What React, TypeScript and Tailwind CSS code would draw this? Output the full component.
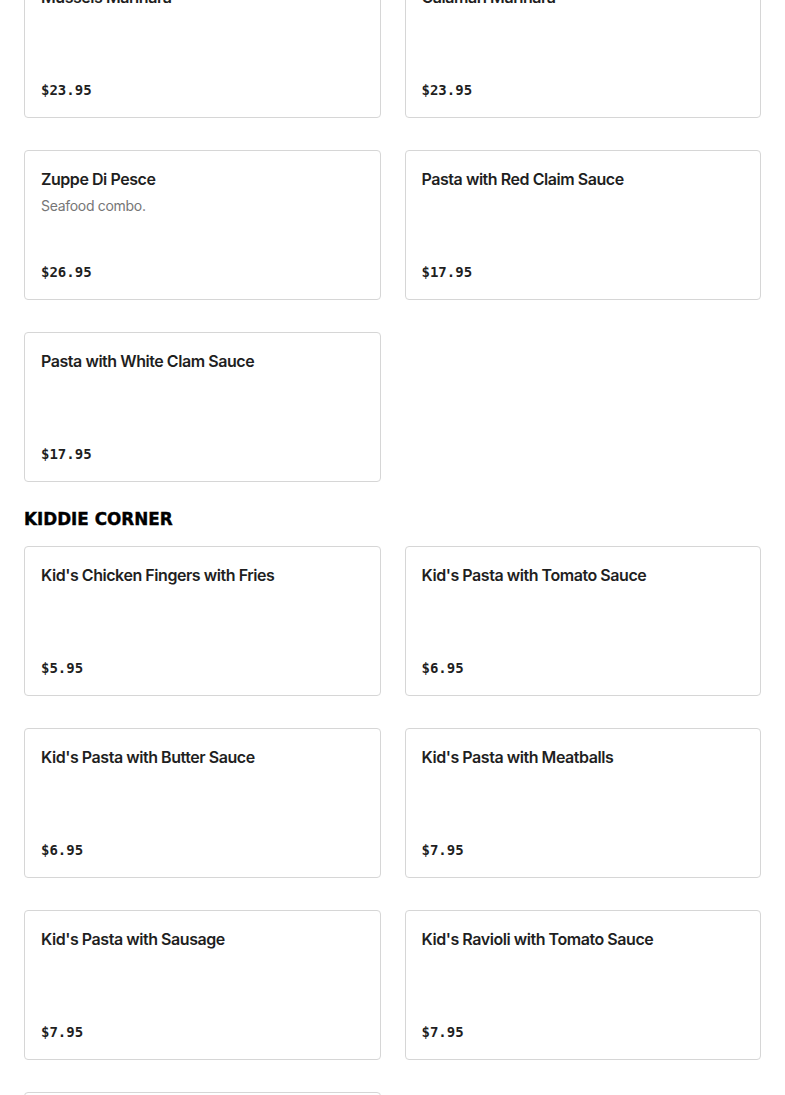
import React from "react";

type Item = { name: string; desc?: string; price: string };

const seafood: Item[] = [
  { name: "Mussels Marinara", price: "$23.95" },
  { name: "Calamari Marinara", price: "$23.95" },
  { name: "Zuppe Di Pesce", desc: "Seafood combo.", price: "$26.95" },
  { name: "Pasta with Red Claim Sauce", price: "$17.95" },
  { name: "Pasta with White Clam Sauce", price: "$17.95" },
];

const kids: Item[] = [
  { name: "Kid's Chicken Fingers with Fries", price: "$5.95" },
  { name: "Kid's Pasta with Tomato Sauce", price: "$6.95" },
  { name: "Kid's Pasta with Butter Sauce", price: "$6.95" },
  { name: "Kid's Pasta with Meatballs", price: "$7.95" },
  { name: "Kid's Pasta with Sausage", price: "$7.95" },
  { name: "Kid's Ravioli with Tomato Sauce", price: "$7.95" },
  { name: "Kid's Ravioli with Butter Sauce", price: "$7.95" },
];

function Card({ item }: { item: Item }) {
  return (
    <div className="flex h-[150px] flex-col justify-between rounded-[4px] border border-[#d6d6d6] bg-white px-4 pt-[16px] pb-[17px]">
      <div>
        <div className="text-[16px] leading-6 font-semibold tracking-[-0.45px] text-[#1f1f1f] [font-family:Inter,'Liberation_Sans',sans-serif]">
          {item.name}
        </div>
        {item.desc && (
          <div className="mt-[5px] text-[14px] leading-5 tracking-[-0.3px] text-[#767676] [font-family:Inter,'Liberation_Sans',sans-serif]">
            {item.desc}
          </div>
        )}
      </div>
      <div className="text-[14px] leading-5 font-bold text-[#1f1f1f] [font-family:'DejaVu_Sans_Mono',monospace]">
        {item.price}
      </div>
    </div>
  );
}

export default function App() {
  return (
    <div className="min-h-[1095px] overflow-hidden bg-white">
      <div className="-mt-[32px] px-6">
        <div className="grid grid-cols-2 gap-x-6 gap-y-8">
          {seafood.map((it) => (
            <Card key={it.name} item={it} />
          ))}
        </div>
        <h2 className="mt-[25px] mb-[15px] text-[16.8px] leading-6 font-bold text-black [font-family:'DejaVu_Sans',sans-serif] [-webkit-text-stroke:0.4px_black]">
          KIDDIE CORNER
        </h2>
        <div className="grid grid-cols-2 gap-x-6 gap-y-8">
          {kids.map((it) => (
            <Card key={it.name} item={it} />
          ))}
        </div>
      </div>
    </div>
  );
}
